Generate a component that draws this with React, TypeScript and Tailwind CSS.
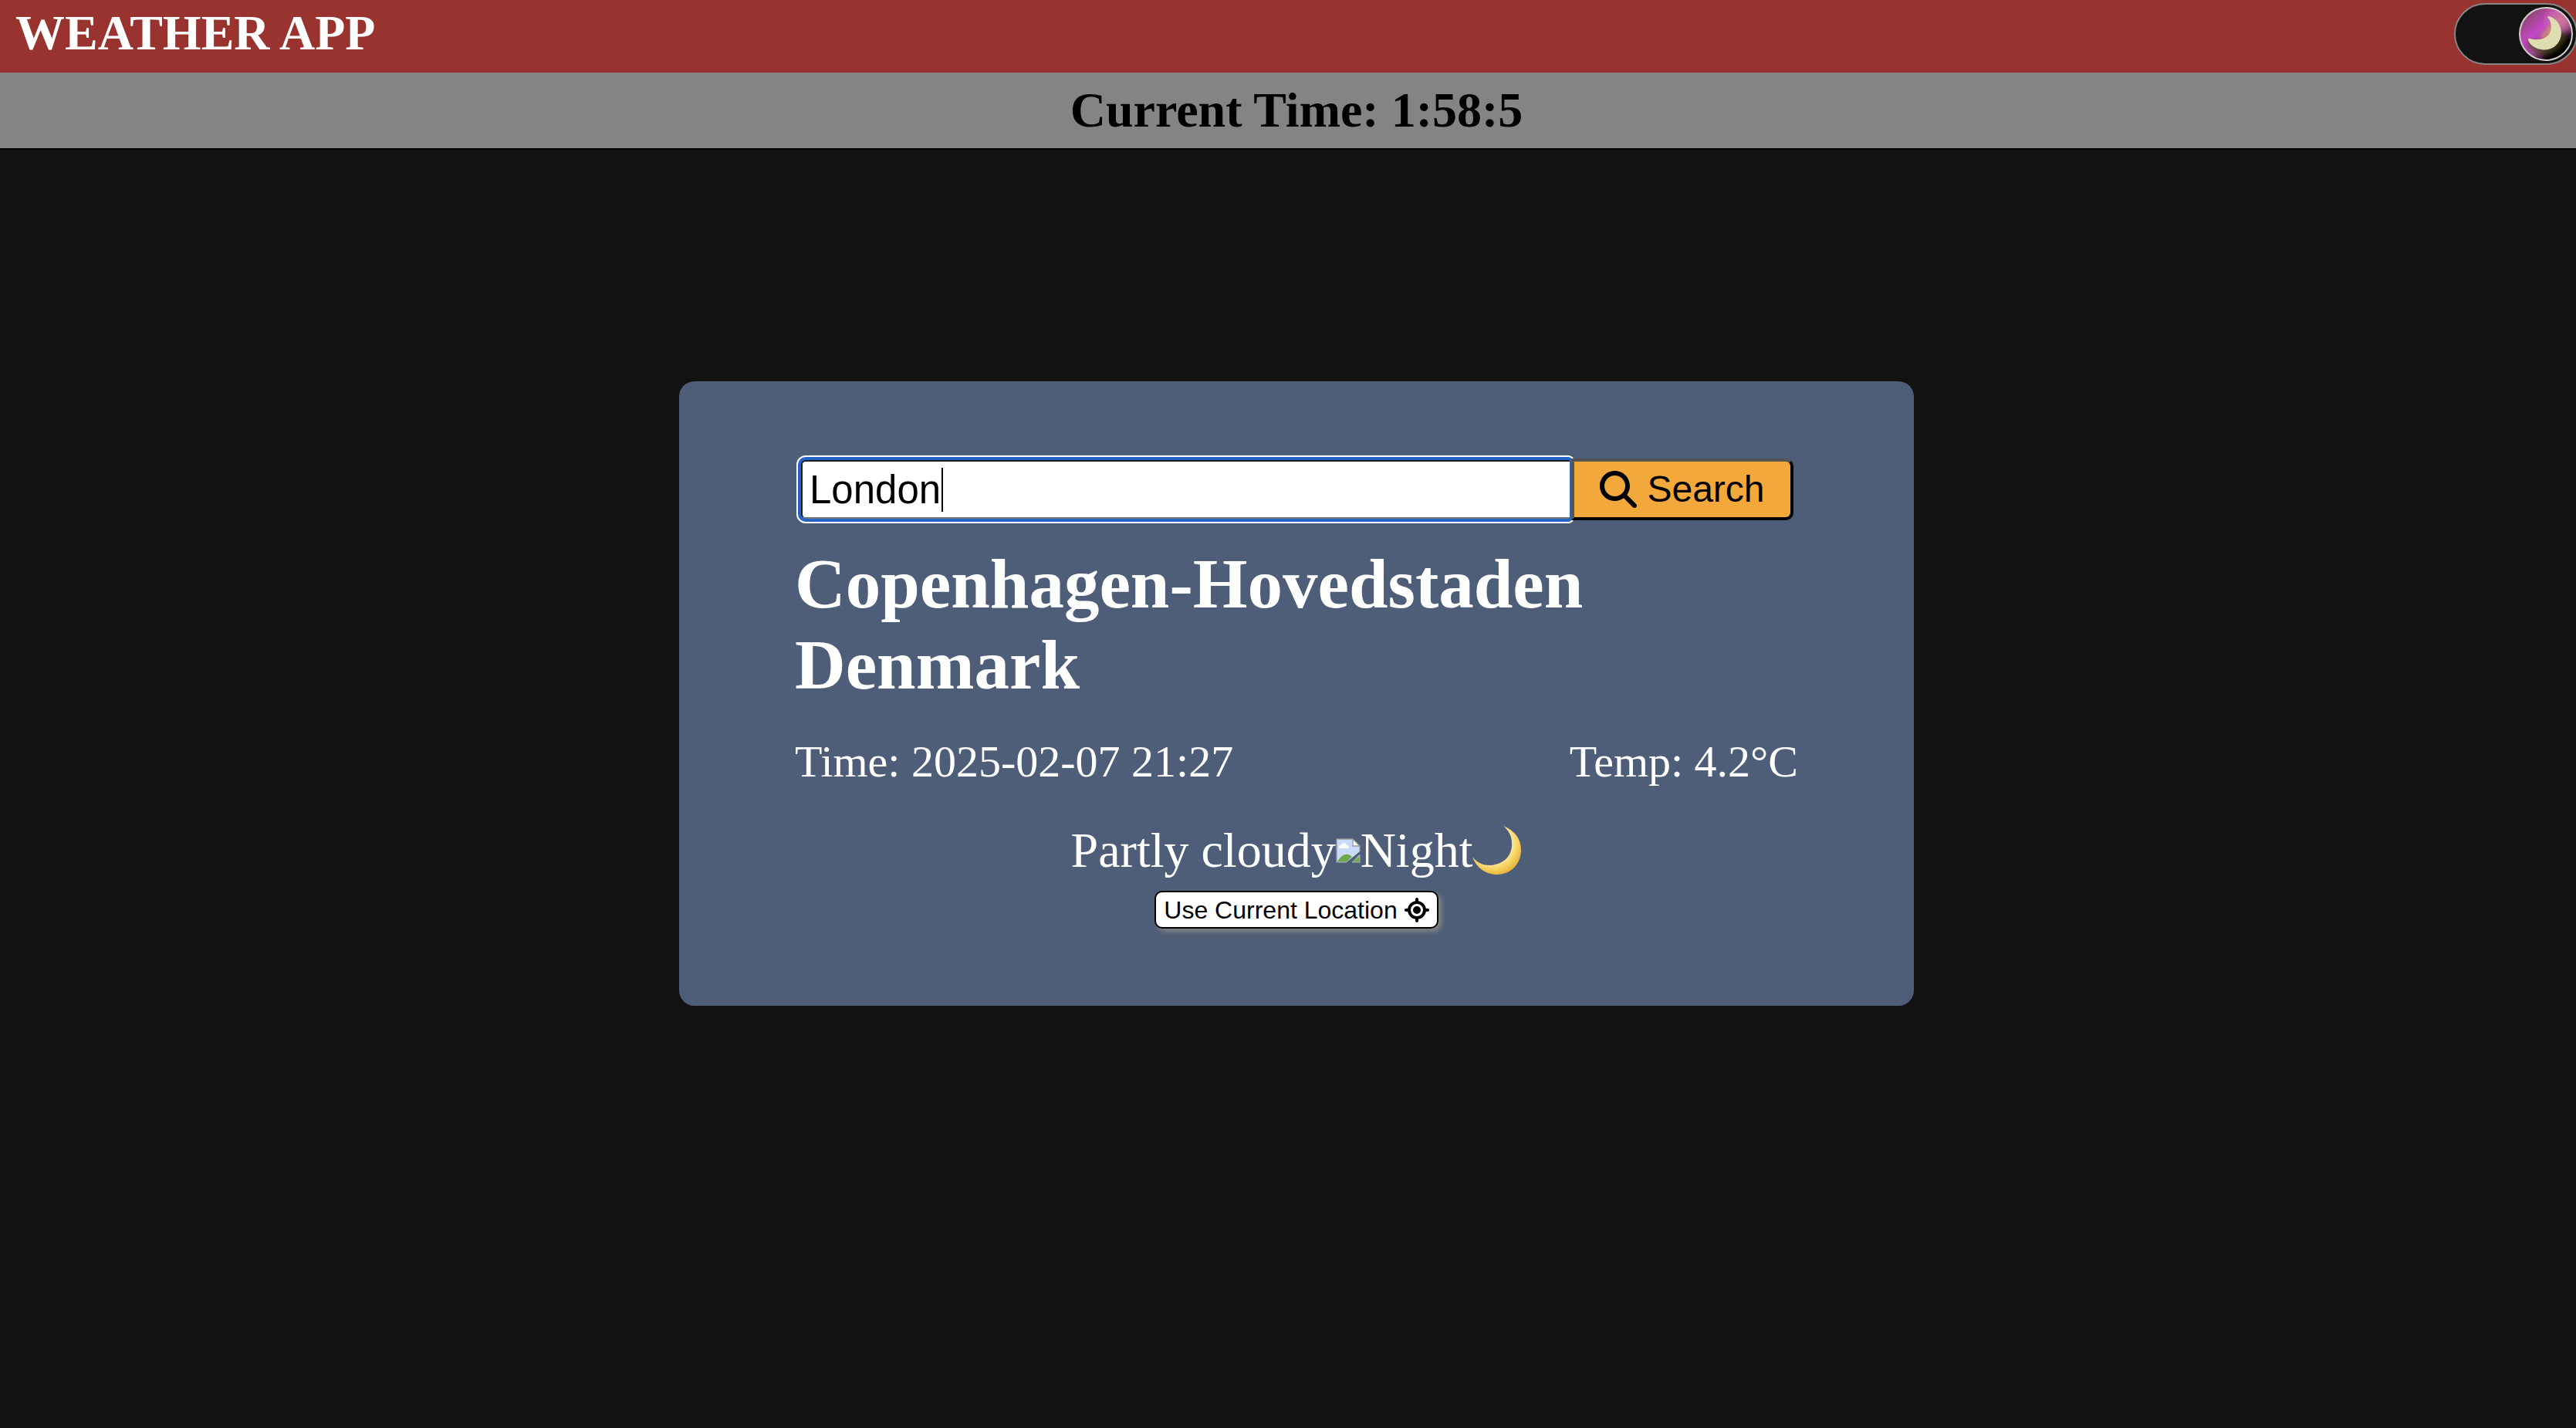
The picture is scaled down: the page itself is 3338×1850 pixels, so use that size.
import { useState } from "react";
import { FaMagnifyingGlass, FaLocationCrosshairs } from "react-icons/fa6";

function BrokenImage() {
  return (
    <svg viewBox="0 0 32 32" className="size-8 shrink-0" role="img" aria-label="Partly cloudy">
      <path d="M1 1h21l9 9v7L14 31H1z" fill="#c9dbf8" />
      <path d="M31 21v10H21z" fill="#c9dbf8" />
      <path d="M4.500 13c-1.500-2 0-4 2.500-4 1-4 6-4 7 0 3 0 3.500 3 1.500 4z" fill="#fff" />
      <path d="M2 30.500c5-9 12-13 19-6.500l-7 6.500z" fill="#6cab4a" />
      <path d="M21.500 30.500l9-7.500v7.500z" fill="#6cab4a" />
      <path d="M22 1v9h9z" fill="#fff" />
      <path d="M14 31H1V1h21l9 9v7M22 1v9h9M31 21v10H21" fill="none" stroke="#9a9a9a" strokeWidth="1.3" />
    </svg>
  );
}

function CrescentMoon() {
  return (
    <svg viewBox="0 1 64 64" className="size-16 shrink-0" role="img" aria-label="Moon">
      <defs>
        <radialGradient id="moon" gradientUnits="userSpaceOnUse" cx="26" cy="24" r="40">
          <stop offset="0.6" stopColor="#fbe9a0" />
          <stop offset="0.8" stopColor="#f7d566" />
          <stop offset="1" stopColor="#e9b840" />
        </radialGradient>
      </defs>
      <path
        d="M40 1C55 7 63 18 63 32C63 50 50 64 32 64C17 64 5 55 0 41C6 49 14 52 23 52C41 51 52 39 51 23C51 14 47 7 40 1Z"
        fill="url(#moon)"
      />
    </svg>
  );
}

function ThemeToggle() {
  const [dark, setDark] = useState(true);
  return (
    <label className="flex h-20 w-40 shrink-0 cursor-pointer items-center justify-end rounded-full border-2 border-[#858585] bg-[#121212] pr-1">
      <input
        type="checkbox"
        aria-label="Dark mode"
        checked={dark}
        onChange={(e) => setDark(e.target.checked)}
        className="sr-only"
      />
      <svg viewBox="0 0 70 70" className="size-[70px]" aria-hidden="true">
        <defs>
          <linearGradient id="knob" x1="0.15" y1="0.1" x2="0.85" y2="0.9">
            <stop offset="0" stopColor="#8c4568" />
            <stop offset="0.35" stopColor="#c348c4" />
            <stop offset="0.6" stopColor="#a0489a" />
            <stop offset="0.85" stopColor="#14060f" />
          </linearGradient>
          <radialGradient id="blush" gradientUnits="userSpaceOnUse" cx="54" cy="16" r="24">
            <stop offset="0" stopColor="#d07a9c" />
            <stop offset="1" stopColor="#d07a9c" stopOpacity="0" />
          </radialGradient>
          <radialGradient id="shade" gradientUnits="userSpaceOnUse" cx="60" cy="62" r="32">
            <stop offset="0.3" stopColor="#000" />
            <stop offset="1" stopColor="#000" stopOpacity="0" />
          </radialGradient>
          <filter id="glow" x="-50%" y="-50%" width="200%" height="200%">
            <feGaussianBlur stdDeviation="3" />
          </filter>
        </defs>
        <circle cx="35" cy="35" r="34" fill="url(#knob)" />
        <circle cx="35" cy="35" r="34" fill="url(#blush)" />
        <circle cx="35" cy="35" r="34" fill="url(#shade)" />
        <path d="M30 39C37 36 41 30 41 24" fill="none" stroke="#d89a70" strokeWidth="7" filter="url(#glow)" />
        <path d="M13 44C20 62 50 64 58 36" fill="none" stroke="#4a4a10" strokeWidth="5" filter="url(#glow)" />
        <path
          d="M38 12C49 14 55 24 55 34C54 48 44 56 32 55.500C22 55 13 49 12 42C12 41 13 40.500 14 41C32 46 47 36 40 17C38 14 36 13 38 12Z"
          fill="#deddb0"
        />
        <circle cx="35" cy="35" r="34" fill="none" stroke="#d3d0cc" strokeWidth="2" />
      </svg>
    </label>
  );
}

export default function App() {
  const [city, setCity] = useState("London");
  return (
    <div className="min-h-screen overflow-hidden bg-[#121212] font-['Liberation_Serif',serif]">
      <div className="w-[calc(100%+22px)]">
        <header className="flex items-start justify-between bg-[#983330] px-5 pt-1 pb-2.5">
          <h1 className="pt-0.5 text-[64px] leading-[74px] font-bold text-white">WEATHER APP</h1>
          <ThemeToggle />
        </header>
        <div className="border-b-2 border-black bg-[#848484] py-3 text-center">
          <h2 className="text-[64px] leading-[74px] font-bold text-black">Current Time: 1:58:5</h2>
        </div>

        <main className="mx-auto mt-[300px] w-full max-w-[1600px] rounded-[20px] bg-[#4e5e78] px-[150px] py-[100px] text-white">
          <form className="flex px-1.5" onSubmit={(e) => e.preventDefault()}>
            <div className="relative min-w-0 flex-1">
              <input
                type="text"
                aria-label="City"
                value={city}
                onChange={(e) => setCity(e.target.value)}
                className="h-20 w-full rounded-l-[8px] rounded-r-[4px] border-4 border-r-0 border-t-[#1c1c1c] border-b-[#767676] border-l-[#1c1c1c] bg-white px-[9px] font-['Liberation_Sans',sans-serif] text-[51px] text-black caret-transparent shadow-[0_0_0_4px_#fff] outline-4 -outline-offset-2 outline-[#2463c8]"
              />
              <span className="absolute top-3 left-[184px] h-[57px] w-0.5 bg-black" />
            </div>
            <button
              type="submit"
              className="relative z-10 flex h-20 w-72 items-center justify-center gap-[13px] rounded-r-[10px] border-4 border-t-[#555] border-r-black border-b-black border-l-[#555] bg-[#f2a83b] font-['Liberation_Sans',sans-serif] text-[48px] text-black"
            >
              <FaMagnifyingGlass className="size-12" />
              Search
            </button>
          </form>

          <h2 className="mt-[30px] text-[91px] leading-[105px] font-bold">
            Copenhagen-Hovedstaden
            <br />
            Denmark
          </h2>
          <div className="mt-10 flex justify-between text-[58px] leading-[66px]">
            <p>Time: 2025-02-07 21:27</p>
            <p>Temp: 4.2°C</p>
          </div>
          <div className="mt-[45px] flex items-center justify-center text-[64px] leading-[74px]">
            <p>Partly cloudy</p>
            <BrokenImage />
            <p>Night</p>
            <CrescentMoon />
          </div>
          <div className="mt-[15px] flex justify-center">
            <button
              type="button"
              className="flex h-[49px] items-center gap-[9px] rounded-[10px] border-2 border-black bg-white px-2.5 font-['Liberation_Sans',sans-serif] text-[32px] text-black shadow-[4px_4px_6px_#848484]"
            >
              Use Current Location
              <FaLocationCrosshairs className="size-8" />
            </button>
          </div>
        </main>
      </div>
    </div>
  );
}
